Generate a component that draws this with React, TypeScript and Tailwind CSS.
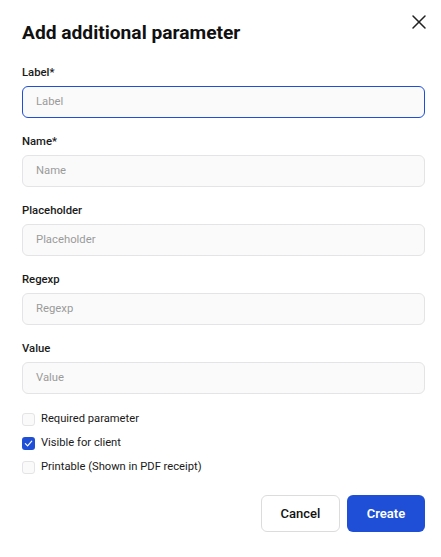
import React from "react";

function Field({ label, placeholder, focused }: { label: string; placeholder: string; focused?: boolean }) {
  return (
    <div className="flex flex-col gap-[5px]">
      <div className="text-[11.3px] leading-[16px] font-medium text-[#1a1a1a]">{label}</div>
      <div
        className={
          focused
            ? "h-[32px] rounded-[6px] border border-[#1e4fd6] bg-[#fafafa] px-[13px] flex items-center"
            : "h-[32px] rounded-[6px] border border-[#e4e4e7] bg-[#fafafa] px-[13px] flex items-center"
        }
      >
        <span className="text-[11.3px] leading-[16px] text-[#9a9a9a]">{placeholder}</span>
      </div>
    </div>
  );
}

function Check({ label, checked }: { label: string; checked?: boolean }) {
  return (
    <div className="flex items-center gap-[6px] h-[16px]">
      {checked ? (
        <div className="w-[13px] h-[13px] rounded-[3px] bg-[#1e4fd6] flex items-center justify-center">
          <svg width="9" height="9" viewBox="0 0 10 10" fill="none">
            <path d="M1.5 5.2 L4 7.6 L8.6 2.4" stroke="white" strokeWidth="1.3" strokeLinecap="round" strokeLinejoin="round" />
          </svg>
        </div>
      ) : (
        <div className="w-[13px] h-[13px] rounded-[3px] border border-[#e4e4e7] bg-[#fafafa]" />
      )}
      <span className="text-[11.2px] leading-[16px] text-[#1a1a1a]">{label}</span>
    </div>
  );
}

export default function App() {
  return (
    <div
      className="relative w-[441px] h-[557px] bg-white pl-[22px] pr-[16px] pt-[18px]"
      style={{ fontFamily: "Roboto, 'Noto Sans', sans-serif" }}
    >
      <button className="absolute top-[10px] right-[10px] w-[24px] h-[24px] flex items-center justify-center text-[#222]">
        <svg width="24" height="24" viewBox="0 0 24 24" fill="none" stroke="currentColor" strokeWidth="1.5" strokeLinecap="round">
          <path d="M18 6 6 18" />
          <path d="m6 6 12 12" />
        </svg>
      </button>
      <h1 className="text-[19.2px] leading-[30px] font-bold text-[#111]">Add additional parameter</h1>
      <div className="mt-[17px] flex flex-col gap-[16px]">
        <Field label="Label*" placeholder="Label" focused />
        <Field label="Name*" placeholder="Name" />
        <Field label="Placeholder" placeholder="Placeholder" />
        <Field label="Regexp" placeholder="Regexp" />
        <Field label="Value" placeholder="Value" />
      </div>
      <div className="mt-[17px] flex flex-col gap-[8px]">
        <Check label="Required parameter" />
        <Check label="Visible for client" checked />
        <Check label="Printable (Shown in PDF receipt)" />
      </div>
      <div className="mt-[20px] flex justify-end gap-[7px]">
        <button className="w-[79px] h-[37px] rounded-[6px] border border-[#dcdcdc] bg-white text-[13px] font-medium text-[#111]">
          Cancel
        </button>
        <button className="w-[78px] h-[37px] rounded-[6px] bg-[#1e4fd6] text-[13px] font-semibold text-white">
          Create
        </button>
      </div>
    </div>
  );
}
